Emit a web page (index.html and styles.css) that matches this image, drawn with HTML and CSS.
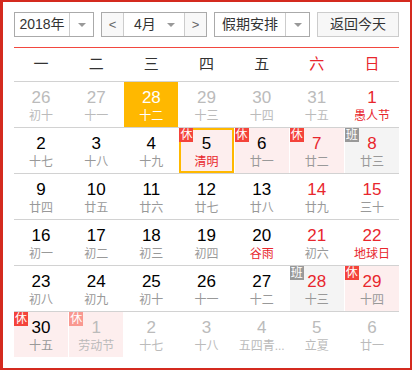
FILE: index.html
```html
<!DOCTYPE html>
<html lang="zh-CN">
<head>
  <meta charset="UTF-8">
  <title>万年历</title>
  <meta name="viewport" content="width=device-width, initial-scale=1">
  <link rel="stylesheet" href="styles.css">
</head>
<body>
  <div class="calendar">
    <div class="toolbar">
      <div class="select year-select">
        <span class="select-text">2018年</span>
        <span class="select-arrow"><i class="caret"></i></span>
      </div>
      <div class="select month-select">
        <span class="step">&lt;</span>
        <span class="month-text">4月 <i class="caret"></i></span>
        <span class="step">&gt;</span>
      </div>
      <div class="select holiday-select">
        <span class="select-text">假期安排</span>
        <span class="select-arrow"><i class="caret"></i></span>
      </div>
      <div class="today-btn">返回今天</div>
    </div>

    <div class="weekdays">
      <span>一</span><span>二</span><span>三</span><span>四</span><span>五</span>
      <span class="red">六</span><span class="red">日</span>
    </div>

    <div class="week">
      <div class="day other"><b>26</b><em>初十</em></div>
      <div class="day other"><b>27</b><em>十一</em></div>
      <div class="day today"><b>28</b><em>十二</em></div>
      <div class="day other"><b>29</b><em>十三</em></div>
      <div class="day other"><b>30</b><em>十四</em></div>
      <div class="day other"><b>31</b><em>十五</em></div>
      <div class="day weekend fest"><b>1</b><em>愚人节</em></div>
    </div>
    <div class="week">
      <div class="day"><b>2</b><em>十七</em></div>
      <div class="day"><b>3</b><em>十八</em></div>
      <div class="day"><b>4</b><em>十九</em></div>
      <div class="day rest picked fest"><span class="tag">休</span><b>5</b><em>清明</em></div>
      <div class="day rest"><span class="tag">休</span><b>6</b><em>廿一</em></div>
      <div class="day rest weekend"><span class="tag">休</span><b>7</b><em>廿二</em></div>
      <div class="day work weekend"><span class="tag tag-work">班</span><b>8</b><em>廿三</em></div>
    </div>
    <div class="week">
      <div class="day"><b>9</b><em>廿四</em></div>
      <div class="day"><b>10</b><em>廿五</em></div>
      <div class="day"><b>11</b><em>廿六</em></div>
      <div class="day"><b>12</b><em>廿七</em></div>
      <div class="day"><b>13</b><em>廿八</em></div>
      <div class="day weekend"><b>14</b><em>廿九</em></div>
      <div class="day weekend"><b>15</b><em>三十</em></div>
    </div>
    <div class="week">
      <div class="day"><b>16</b><em>初一</em></div>
      <div class="day"><b>17</b><em>初二</em></div>
      <div class="day"><b>18</b><em>初三</em></div>
      <div class="day"><b>19</b><em>初四</em></div>
      <div class="day fest"><b>20</b><em>谷雨</em></div>
      <div class="day weekend"><b>21</b><em>初六</em></div>
      <div class="day weekend fest"><b>22</b><em>地球日</em></div>
    </div>
    <div class="week">
      <div class="day"><b>23</b><em>初八</em></div>
      <div class="day"><b>24</b><em>初九</em></div>
      <div class="day"><b>25</b><em>初十</em></div>
      <div class="day"><b>26</b><em>十一</em></div>
      <div class="day"><b>27</b><em>十二</em></div>
      <div class="day work weekend"><span class="tag tag-work">班</span><b>28</b><em>十三</em></div>
      <div class="day rest weekend"><span class="tag">休</span><b>29</b><em>十四</em></div>
    </div>
    <div class="week">
      <div class="day rest"><span class="tag">休</span><b>30</b><em>十五</em></div>
      <div class="day rest other"><span class="tag">休</span><b>1</b><em>劳动节</em></div>
      <div class="day other"><b>2</b><em>十七</em></div>
      <div class="day other"><b>3</b><em>十八</em></div>
      <div class="day other"><b>4</b><em>五四青...</em></div>
      <div class="day other"><b>5</b><em>立夏</em></div>
      <div class="day other"><b>6</b><em>廿一</em></div>
    </div>
  </div>
</body>
</html>
```

FILE: styles.css
```css
:root {
  --red: #e8262d;
  --frame: #d42a1f;
  --orange: #ffb800;
  --line: #d2d2d2;
  --rest-bg: #fdeeee;
  --work-bg: #f4f4f4;
}
body {
  margin: 0;
  font-family: "Liberation Sans", "Noto Sans CJK SC", sans-serif;
  color: #333;
  background: #fff;
}
.calendar {
  width: 412px;
  height: 370px;
  box-sizing: border-box;
  border: 2px solid var(--frame);
  border-left-width: 3px;
  padding: 10px 11px 10px 11px;
}
.toolbar {
  display: flex;
  justify-content: space-between;
  padding-bottom: 10px;
  border-bottom: 1px solid #f2483f;
  font-size: 14px;
}
.select, .today-btn {
  display: flex;
  height: 25px;
  box-sizing: border-box;
  border: 1px solid #aaa;
  line-height: 23px;
  background: #fff;
}
.select-text {
  text-align: center;
  border-right: 1px solid #ccc;
}
.year-select .select-text { width: 54px; }
.holiday-select .select-text { width: 70px; }
.select-arrow {
  width: 23px;
  display: flex;
  align-items: center;
  justify-content: center;
}
.caret {
  display: inline-block;
  width: 0;
  height: 0;
  border-left: 4px solid transparent;
  border-right: 4px solid transparent;
  border-top: 4px solid #999;
  vertical-align: middle;
}
.step {
  width: 21px;
  text-align: center;
  color: #666;
  background: #f8f8f8;
  font-size: 13px;
}
.step:first-child { border-right: 1px solid #ccc; }
.step:last-child { border-left: 1px solid #ccc; }
.month-text {
  width: 60px;
  padding-left: 10px;
  box-sizing: border-box;
}
.month-text .caret { margin-left: 7px; }
.today-btn {
  width: 82px;
  justify-content: center;
  border-color: #ccc;
  background: #f7f7f7;
}
.weekdays {
  display: grid;
  grid-template-columns: repeat(7, 1fr);
  column-gap: 1px;
  height: 33px;
  line-height: 31px;
  text-align: center;
  font-size: 15px;
}
.weekdays .red { color: var(--red); }
.week {
  display: grid;
  grid-template-columns: repeat(7, 1fr);
  column-gap: 1px;
  height: 45px;
  border-top: 1px solid var(--line);
}
.day {
  position: relative;
  text-align: center;
  padding-top: 5px;
}
.day b {
  display: block;
  font-weight: normal;
  font-size: 17px;
  line-height: 22px;
  color: #000;
}
.day em {
  display: block;
  font-style: normal;
  font-size: 12px;
  line-height: 14px;
  color: #999;
  white-space: nowrap;
}
.day.weekend b { color: var(--red); }
.day.fest em { color: var(--red); }
.day.other b, .day.other em { color: #bbb; }
.day.rest { background: var(--rest-bg); }
.day.work { background: var(--work-bg); }
.day.today { background: var(--orange); }
.day.today b, .day.today em { color: #fff; }
.day.picked { box-shadow: inset 0 0 0 2px var(--orange); }
.tag {
  position: absolute;
  left: 0;
  top: 0;
  width: 14px;
  height: 14px;
  line-height: 14px;
  font-size: 12px;
  color: #fff;
  background: #f4433a;
  text-align: center;
}
.tag-work { background: #999; }
.day.other .tag { background: #f99890; }
```
